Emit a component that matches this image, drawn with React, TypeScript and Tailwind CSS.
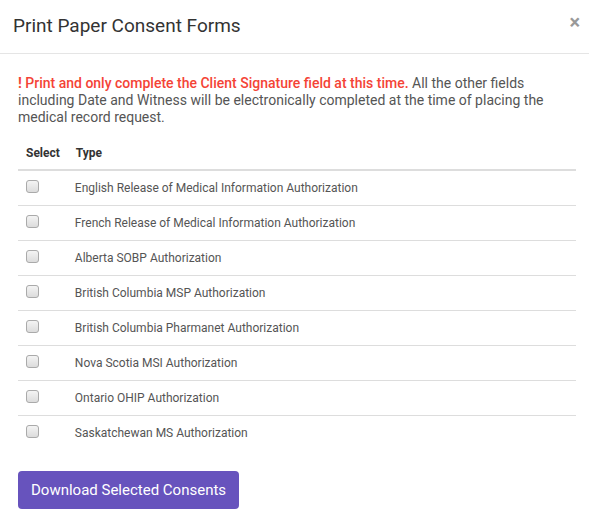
import React from "react";

const rows = [
  "English Release of Medical Information Authorization",
  "French Release of Medical Information Authorization",
  "Alberta SOBP Authorization",
  "British Columbia MSP Authorization",
  "British Columbia Pharmanet Authorization",
  "Nova Scotia MSI Authorization",
  "Ontario OHIP Authorization",
  "Saskatchewan MS Authorization",
];

export default function App() {
  return (
    <div className="w-[589px] h-[522px] bg-white text-[#333] overflow-hidden" style={{ fontFamily: "Roboto, 'Liberation Sans', sans-serif" }}>
      <div className="flex items-center justify-between h-[54px] border-b border-[#e5e5e5] pl-[13px] pr-[9px]">
        <h4 className="text-[19px] leading-[20px] text-[#333] pb-[2px]">Print Paper Consent Forms</h4>
        <span className="text-[#999] text-[20px] font-bold leading-none -mt-[10px]">×</span>
      </div>
      <div className="pl-[18px] pr-[13px] pt-[21px]">
        <p className="text-[14px] leading-[17px] text-[#555] pr-[5px]">
          <span className="text-[#f44336] font-bold">!</span>{" "}
          <span className="text-[#f44336] font-medium">Print and only complete the Client Signature field at this time.</span>{" "}
          All the other fields including Date and Witness will be electronically completed at the time of placing the medical record request.
        </p>
        <table className="w-full mt-[11px] text-[12px] text-[#555] border-collapse">
          <thead>
            <tr className="border-b-2 border-[#ddd]">
              <th className="w-[49px] text-left font-bold text-[#333] px-[8px] h-[33px]">Select</th>
              <th className="text-left font-bold text-[#333] px-[8px]">Type</th>
            </tr>
          </thead>
          <tbody>
            {rows.map((r, i) => (
              <tr key={r} className={i < rows.length - 1 ? "border-b border-[#ddd]" : ""}>
                <td className="px-[8px] h-[35px] align-middle">
                  <div className="w-[13px] h-[13px] rounded-[3px] border border-[#aaa] bg-gradient-to-b from-[#f4f4f4] to-[#dcdcdc] -mt-[2px]"></div>
                </td>
                <td className="px-[7px] align-middle">{r}</td>
              </tr>
            ))}
          </tbody>
        </table>
        <button className="mt-[21px] h-[38px] px-[13px] rounded-[4px] bg-[#6753bd] text-white text-[15px] font-normal">
          Download Selected Consents
        </button>
      </div>
    </div>
  );
}
